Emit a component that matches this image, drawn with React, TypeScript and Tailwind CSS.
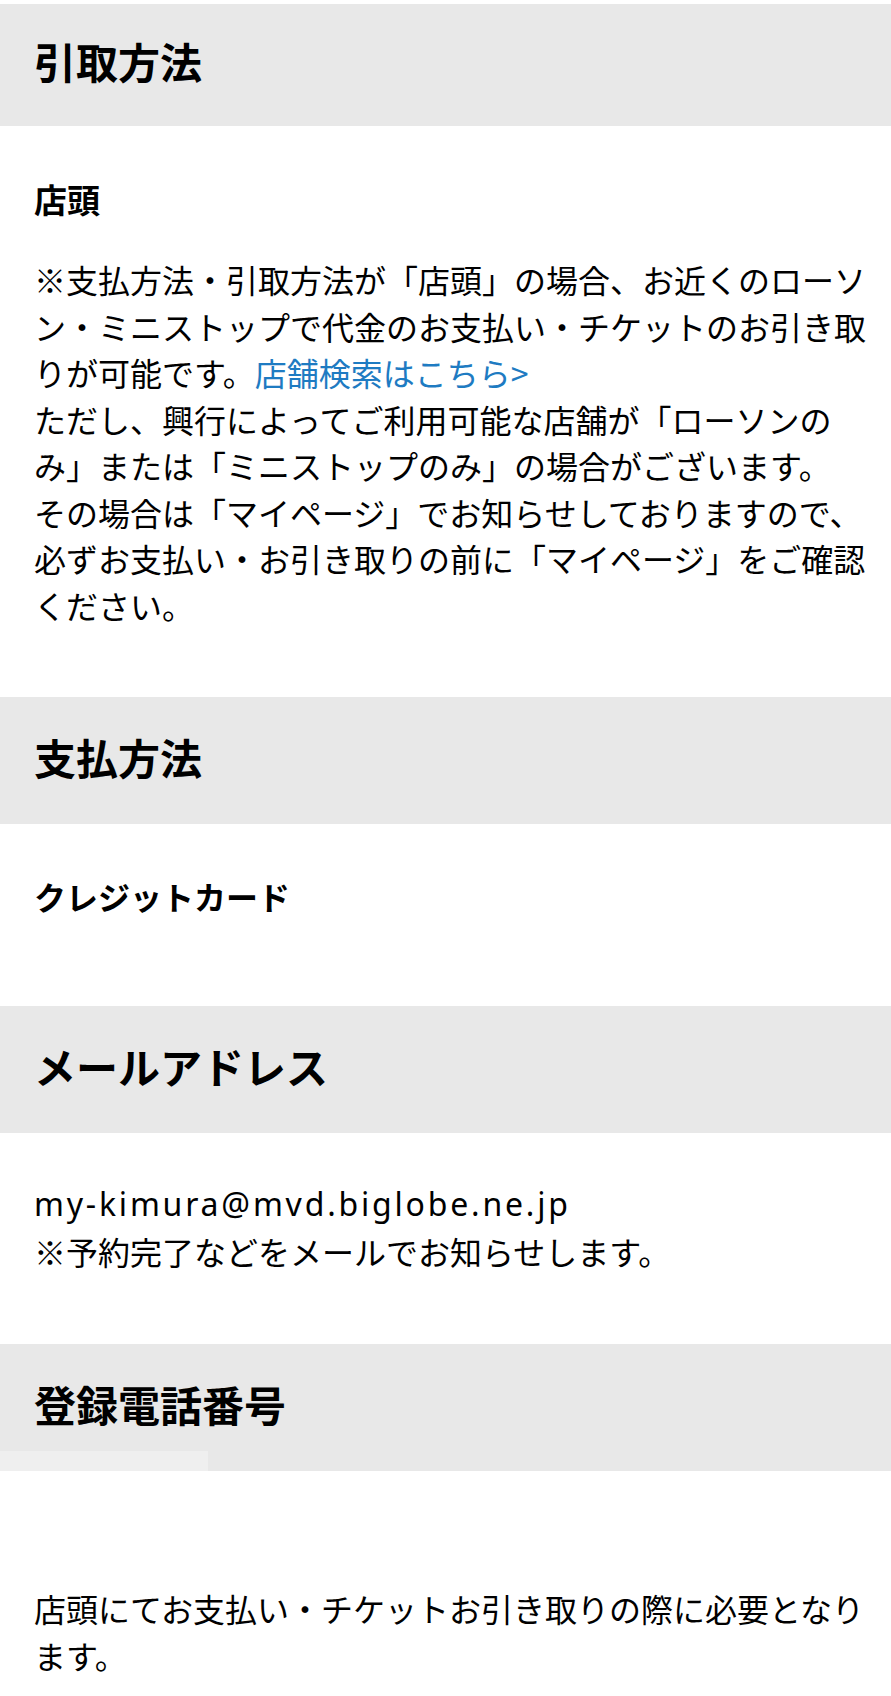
import React from "react";

function Band({ title, first, strip }: { title: string; first?: boolean; strip?: boolean }) {
  return (
    <div
      className={
        "relative flex items-center bg-[#e8e8e8] pl-[34px] pb-[8px] " +
        (first ? "mt-[4px] h-[122px]" : "h-[127px]")
      }
    >
      <h2 className="text-[42px] leading-[50px] font-bold text-black tracking-[0px]">{title}</h2>
      {strip && <div className="absolute left-0 bottom-0 h-[20px] w-[208px] bg-[#efefef]" />}
    </div>
  );
}

export default function App() {
  return (
    <div className="w-[891px] bg-white font-['Noto_Sans_CJK_JP',sans-serif] text-black">
      <Band title="引取方法" first />
      <div className="pl-[34px] pt-[50px] pb-[69px]">
        <p className="text-[33px] leading-[46.5px] font-bold">店頭</p>
        <p className="mt-[33.5px] text-[32px] leading-[46.5px] whitespace-nowrap">
          ※支払方法・引取方法が「店頭」の場合、お近くのローソ
          <br />
          ン・ミニストップで代金のお支払い・チケットのお引き取
          <br />
          りが可能です。<a className="text-[#1e7bc2]" href="#">店舗検索はこちら&gt;</a>
          <br />
          ただし、興行によってご利用可能な店舗が「ローソンの
          <br />
          み」または「ミニストップのみ」の場合がございます。
          <br />
          その場合は「マイページ」でお知らせしておりますので、
          <br />
          必ずお支払い・お引き取りの前に「マイページ」をご確認
          <br />
          ください。
        </p>
      </div>

      <Band title="支払方法" />
      <div className="pl-[34px] pt-[48.5px] pb-[87px]">
        <p className="text-[32px] leading-[46.5px] font-bold">クレジットカード</p>
      </div>

      <Band title="メールアドレス" />
      <div className="pl-[34px] pt-[48px] pb-[70px] text-[32px] leading-[46.5px] whitespace-nowrap">
        <div className="h-[46.5px] font-['Noto_Sans','Noto_Sans_CJK_JP',sans-serif] tracking-[2.8px]">
          my-kimura@mvd.biglobe.ne.jp
        </div>
        <div className="h-[46.5px]">※予約完了などをメールでお知らせします。</div>
      </div>

      <Band title="登録電話番号" strip />
      <div className="pl-[34px] pt-[114px] pb-[40px]">
        <p className="text-[32px] leading-[46.5px] whitespace-nowrap">
          店頭にてお支払い・チケットお引き取りの際に必要となり
          <br />
          ます。
        </p>
      </div>
    </div>
  );
}
